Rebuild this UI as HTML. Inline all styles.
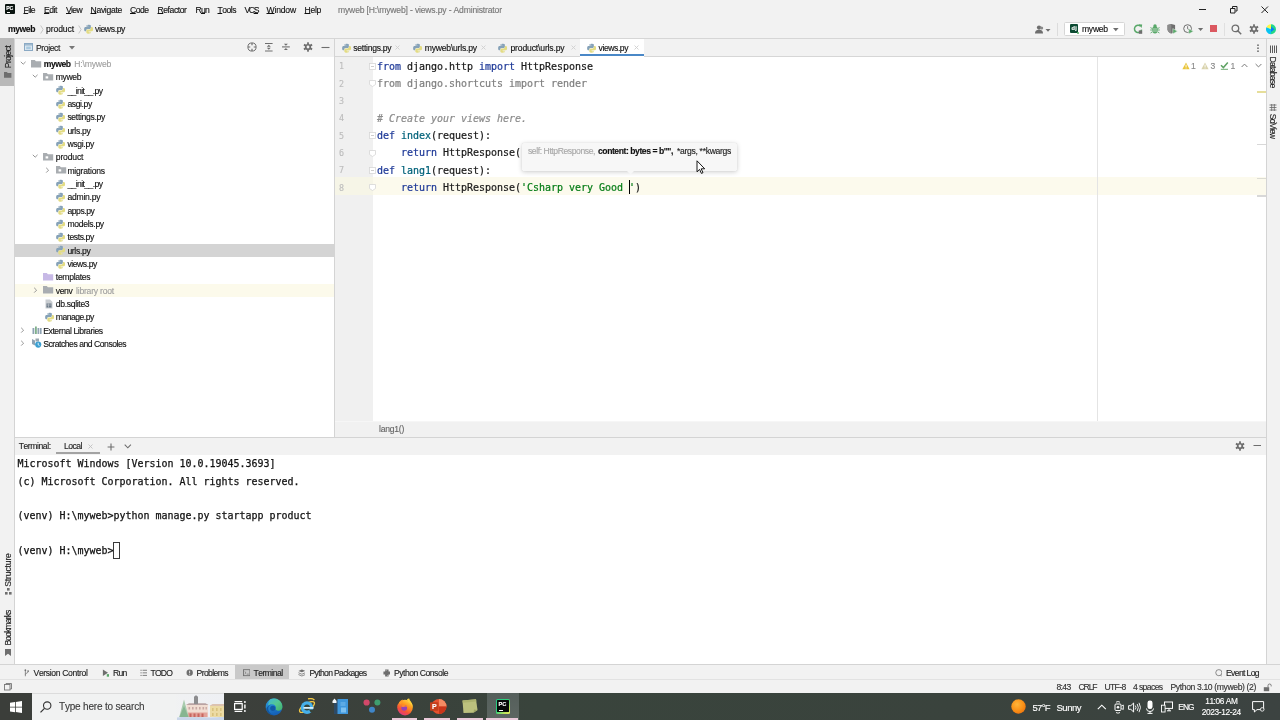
<!DOCTYPE html>
<html><head><meta charset="utf-8"><title>myweb - views.py</title>
<style>
*{box-sizing:border-box;margin:0;padding:0}
html,body{width:1280px;height:720px;overflow:hidden;background:#f2f2f2}
body{position:relative;will-change:transform;font-family:"Liberation Sans","DejaVu Sans",sans-serif;font-size:8.6px;color:#1a1a1a;font-kerning:none}
.a{position:absolute;white-space:nowrap}
.t{white-space:pre;-webkit-text-stroke:0.13px currentColor}
.mono{font-family:"DejaVu Sans Mono","Liberation Mono",monospace;font-size:9.97px;line-height:17.333px;white-space:pre;color:#1a1a1a}
.k{color:#1f3a98}.f{color:#00627a}.s{color:#067d17}.c{color:#8c8c8c;font-style:italic}.g{color:#808080}
.ed{-webkit-text-stroke:0.22px currentColor}
.tm{-webkit-text-stroke:0.25px currentColor;color:#111}
u{text-decoration-thickness:0.7px;text-underline-offset:0.3px}
</style></head><body>
<div class="a" style="left:0px;top:0px;width:1280px;height:38px;background:#f2f2f2;"></div>
<div class="a" style="left:0px;top:38px;width:1280px;height:1px;background:#d6d6d6;"></div>
<div class="a" style="left:0px;top:39px;width:14px;height:625px;background:#f2f2f2;"></div>
<div class="a" style="left:14px;top:39px;width:1px;height:625px;background:#d4d4d4;"></div>
<div class="a" style="left:1267px;top:39px;width:13px;height:625px;background:#f2f2f2;"></div>
<div class="a" style="left:1266px;top:39px;width:1px;height:625px;background:#d4d4d4;"></div>
<div class="a" style="left:15px;top:39px;width:319px;height:18px;background:#f2f2f2;"></div>
<div class="a" style="left:15px;top:57px;width:319px;height:380px;background:#fff;"></div>
<div class="a" style="left:334px;top:39px;width:1px;height:398px;background:#d4d4d4;"></div>
<div class="a" style="left:335px;top:39px;width:931px;height:17px;background:#f2f2f2;"></div>
<div class="a" style="left:335px;top:56px;width:931px;height:1px;background:#d6d6d6;"></div>
<div class="a" style="left:335px;top:57px;width:931px;height:364px;background:#fff;"></div>
<div class="a" style="left:335px;top:57px;width:38px;height:364px;background:#f0f0f0;"></div>
<div class="a" style="left:335px;top:420.5px;width:931px;height:16.5px;background:#f1f1f1;border-top:1px solid #f6f6f6;"></div>
<div class="a" style="left:15px;top:436.5px;width:1251px;height:1px;background:#d4d4d4;"></div>
<div class="a" style="left:15px;top:437.5px;width:1251px;height:17px;background:#f2f2f2;"></div>
<div class="a" style="left:15px;top:454.5px;width:1251px;height:209.5px;background:#fff;"></div>
<div class="a" style="left:0px;top:664px;width:1280px;height:1px;background:#d4d4d4;"></div>
<div class="a" style="left:0px;top:665px;width:1280px;height:14.5px;background:#f2f2f2;"></div>
<div class="a" style="left:0px;top:679px;width:1280px;height:1px;background:#e2e2e2;"></div>
<div class="a" style="left:0px;top:680px;width:1280px;height:13px;background:#f2f2f2;"></div>
<div class="a" style="left:0px;top:693px;width:1280px;height:27px;background:#2b3b36;"></div>
<div class="a" style="left:5px;top:4px;width:10px;height:10px;background:#0a1410;border-radius:1px;"></div>
<span class="a t" style="left:6.20px;top:4.90px;line-height:6px;font-size:5.2px;color:#fff;font-weight:700;letter-spacing:-0.212px;">PC</span>
<div class="a" style="left:6.7px;top:11.8px;width:3.6px;height:0.9px;background:#fff;"></div>
<span class="a t" style="left:23.5px;top:4px;line-height:12px;letter-spacing:-0.589px;color:#111"><u>F</u>ile</span>
<span class="a t" style="left:44px;top:4px;line-height:12px;letter-spacing:-0.455px;color:#111"><u>E</u>dit</span>
<span class="a t" style="left:66px;top:4px;line-height:12px;letter-spacing:-0.660px;color:#111"><u>V</u>iew</span>
<span class="a t" style="left:90.5px;top:4px;line-height:12px;letter-spacing:-0.305px;color:#111"><u>N</u>avigate</span>
<span class="a t" style="left:130px;top:4px;line-height:12px;letter-spacing:-0.515px;color:#111"><u>C</u>ode</span>
<span class="a t" style="left:157.5px;top:4px;line-height:12px;letter-spacing:-0.437px;color:#111"><u>R</u>efactor</span>
<span class="a t" style="left:195.5px;top:4px;line-height:12px;letter-spacing:-0.759px;color:#111">R<u>u</u>n</span>
<span class="a t" style="left:217.5px;top:4px;line-height:12px;letter-spacing:-0.506px;color:#111"><u>T</u>ools</span>
<span class="a t" style="left:244.5px;top:4px;line-height:12px;letter-spacing:-1.395px;color:#111">VC<u>S</u></span>
<span class="a t" style="left:266.5px;top:4px;line-height:12px;letter-spacing:-0.181px;color:#111"><u>W</u>indow</span>
<span class="a t" style="left:304.5px;top:4px;line-height:12px;letter-spacing:-0.297px;color:#111"><u>H</u>elp</span>
<span class="a t" style="left:338.00px;top:4.00px;line-height:12px;color:#777;letter-spacing:-0.176px;">myweb [H:\myweb] - views.py - Administrator</span>
<svg class="a" style="left:1196px;top:3px;" width="80" height="14" viewBox="0 0 80 14"><path d="M3 6.5h7" stroke="#222" stroke-width="1" fill="none"/><path d="M34.500 5.500h4.500v4.500h-4.500z" stroke="#222" stroke-width="1" fill="none"/><path d="M36.500 5v-1.500h4.500v4.500h-1.500" stroke="#222" stroke-width="1" fill="none"/><path d="M65.5 3.5l6.5 6.5M72 3.5l-6.5 6.5" stroke="#222" stroke-width="1" fill="none"/></svg>
<span class="a t" style="left:8.00px;top:23.40px;line-height:12px;color:#111;font-weight:700;letter-spacing:-0.431px;">myweb</span>
<svg class="a" style="left:39.5px;top:25px;" width="4" height="9" viewBox="0 0 4 9"><path d="M0.700 0.500l2.400 4-2.400 4" stroke="#c2c2c2" stroke-width="0.900" fill="none"/></svg>
<span class="a t" style="left:46.00px;top:23.40px;line-height:12px;color:#111;letter-spacing:-0.097px;">product</span>
<svg class="a" style="left:77.5px;top:25px;" width="4" height="9" viewBox="0 0 4 9"><path d="M0.700 0.500l2.400 4-2.400 4" stroke="#c2c2c2" stroke-width="0.900" fill="none"/></svg>
<svg class="a" style="left:83.5px;top:24px;" width="10" height="10" viewBox="0 0 10 10"><g transform="translate(-0.3 0.3) scale(0.98)"><path d="M4.900 0.400c-2.200 0-2.100 1-2.100 1v1h2.200v0.400H2s-1.600-0.200-1.600 2.200 1.400 2.200 1.400 2.200h0.800v-1.100s0-1.300 1.300-1.300h2.200s1.200 0 1.200-1.200V1.600s0.200-1.200-2.400-1.200z" fill="#86a2b8"/><path d="M5.100 9.600c2.200 0 2.100-1 2.100-1v-1H5v-0.400h3s1.600 0.200 1.600-2.200-1.400-2.200-1.400-2.200h-0.800v1.100s0 1.300-1.300 1.300H3.900s-1.200 0-1.200 1.200v2s-0.200 1.200 2.400 1.200z" fill="#e3dc84"/><circle cx="3.700" cy="1.400" r="0.450" fill="#f2f2f2"/><circle cx="6.300" cy="8.600" r="0.450" fill="#f2f2f2"/></g></svg>
<span class="a t" style="left:95.00px;top:23.40px;line-height:12px;color:#111;letter-spacing:-0.372px;">views.py</span>
<div class="a" style="left:0px;top:38px;width:14px;height:47.5px;background:#b9b9b9;"></div>
<span class="a t" style="left:7.80px;top:56.80px;line-height:12px;font-size:8.6px;letter-spacing:-0.638px;color:#222;transform:translate(-50%,-50%) rotate(-90deg)">Project</span>
<svg class="a" style="left:3.5px;top:72px;" width="8" height="6" viewBox="0 0 8 6"><path d="M0 0h2.800l1 1.100h3.600v4.700h-7.400z" fill="#6e6e6e"/></svg>
<span class="a t" style="left:7.80px;top:569.70px;line-height:12px;font-size:8.6px;letter-spacing:-0.154px;color:#222;transform:translate(-50%,-50%) rotate(-90deg)">Structure</span>
<svg class="a" style="left:4.5px;top:587.5px;" width="7" height="7" viewBox="0 0 7 7"><rect x="2" y="0" width="2.6" height="2.6" fill="#6e6e6e"/><rect x="0" y="4" width="2.6" height="2.6" fill="#6e6e6e"/><rect x="4" y="4" width="2.6" height="2.6" fill="#6e6e6e"/></svg>
<span class="a t" style="left:7.80px;top:627.50px;line-height:12px;font-size:8.6px;letter-spacing:-0.890px;color:#222;transform:translate(-50%,-50%) rotate(-90deg)">Bookmarks</span>
<svg class="a" style="left:5px;top:648.5px;" width="6" height="7" viewBox="0 0 6 7"><path d="M0 0h6v7l-3-2.2-3 2.2z" fill="#6e6e6e"/></svg>
<svg class="a" style="left:23.5px;top:43px;" width="9" height="8" viewBox="0 0 9 8"><rect x="0.5" y="0.5" width="8" height="7" fill="#dbe7f0" stroke="#8aa9c4" stroke-width="1"/><rect x="1" y="1" width="7" height="1.6" fill="#9fb9cf"/><rect x="2.2" y="3.6" width="4.6" height="2.6" fill="#a9c9df"/></svg>
<span class="a t" style="left:36.00px;top:41.80px;line-height:12px;color:#222;letter-spacing:-0.395px;">Project</span>
<svg class="a" style="left:69px;top:46px;" width="6" height="4" viewBox="0 0 6 4"><path d="M0 0h6l-3 3.4z" fill="#777"/></svg>
<svg class="a" style="left:246.5px;top:42px;" width="10" height="10" viewBox="0 0 10 10"><circle cx="5" cy="5" r="4.100" fill="none" stroke="#6e6e6e" stroke-width="1"/><path d="M5 1v2.300M5 9V6.700M1 5h2.300M9 5H6.700" stroke="#6e6e6e" stroke-width="1.200"/></svg>
<svg class="a" style="left:263.5px;top:42px;" width="10" height="10" viewBox="0 0 10 10"><path d="M1 1.500h7.600M1 9h7.600" stroke="#6e6e6e" stroke-width="1.100"/><path d="M4.800 2.800l2 2h-4zM4.800 7.700l2-2h-4z" fill="#6e6e6e"/></svg>
<svg class="a" style="left:281px;top:42px;" width="10" height="10" viewBox="0 0 10 10"><path d="M1 4.900h7.800" stroke="#6e6e6e" stroke-width="1.100"/><path d="M4.900 3.700l2-2h-4zM4.900 6.100l2 2h-4z" fill="#6e6e6e"/></svg>
<svg class="a" style="left:303px;top:42px;" width="10" height="10" viewBox="0 0 10 10"><g fill="#6e6e6e"><circle cx="5" cy="5" r="3.1"/><rect x="4.1" y="0.3" width="1.8" height="9.4"/><rect x="4.1" y="0.3" width="1.8" height="9.4" transform="rotate(60 5 5)"/><rect x="4.1" y="0.3" width="1.8" height="9.4" transform="rotate(120 5 5)"/></g><circle cx="5" cy="5" r="1.4" fill="#f2f2f2"/></svg>
<svg class="a" style="left:320.5px;top:45.5px;" width="9" height="3" viewBox="0 0 9 3"><path d="M0.500 1.500h8" stroke="#6e6e6e" stroke-width="1.100"/></svg>
<div class="a" style="left:15px;top:243.662px;width:319px;height:13.333px;background:#d4d4d4;"></div>
<div class="a" style="left:15px;top:283.661px;width:319px;height:13.333px;background:#fcfaeb;"></div>
<svg class="a" style="left:19.5px;top:60.966499999999996px;" width="7" height="6" viewBox="0 0 7 6"><path d="M0.8 0.8l2.4 2.400 2.400-2.400" stroke="#8f8f8f" stroke-width="0.950" fill="none"/></svg>
<svg class="a" style="left:30.5px;top:59.7665px;" width="11" height="8" viewBox="0 0 11 8"><path d="M0 0h3.800l1.100 1.300h5.300v6.300h-10.200z" fill="#a9adb1"/></svg>
<span class="a t" style="left:43.70px;top:58.07px;line-height:12px;color:#111;font-weight:700;letter-spacing:-0.431px;">myweb</span>
<span class="a t" style="left:74.20px;top:58.07px;line-height:12px;color:#a0a0a0;letter-spacing:-0.154px;">H:\myweb</span>
<svg class="a" style="left:32px;top:74.2995px;" width="7" height="6" viewBox="0 0 7 6"><path d="M0.8 0.8l2.4 2.400 2.400-2.400" stroke="#8f8f8f" stroke-width="0.950" fill="none"/></svg>
<svg class="a" style="left:42.5px;top:73.09949999999999px;" width="11" height="8" viewBox="0 0 11 8"><path d="M0 0h3.800l1.100 1.300h5.300v6.300h-10.200z" fill="#a9adb1"/><rect x="2.600" y="3.300" width="2.600" height="2.200" fill="#fff"/></svg>
<span class="a t" style="left:55.80px;top:71.40px;line-height:12px;color:#111;letter-spacing:-0.388px;">myweb</span>
<svg class="a" style="left:56.400000000000006px;top:85.3325px;" width="10" height="10" viewBox="0 0 10 10"><g transform="translate(-0.3 0.3) scale(0.98)"><path d="M4.900 0.400c-2.200 0-2.100 1-2.100 1v1h2.200v0.400H2s-1.600-0.200-1.600 2.200 1.400 2.200 1.400 2.200h0.800v-1.100s0-1.300 1.300-1.300h2.200s1.200 0 1.200-1.200V1.600s0.200-1.200-2.400-1.200z" fill="#86a2b8"/><path d="M5.100 9.600c2.200 0 2.100-1 2.100-1v-1H5v-0.400h3s1.600 0.200 1.600-2.200-1.400-2.200-1.400-2.200h-0.800v1.100s0 1.300-1.300 1.300H3.900s-1.200 0-1.200 1.200v2s-0.200 1.200 2.400 1.200z" fill="#e3dc84"/><circle cx="3.700" cy="1.400" r="0.450" fill="#f2f2f2"/><circle cx="6.300" cy="8.600" r="0.450" fill="#f2f2f2"/></g></svg>
<span class="a t" style="left:67.40px;top:84.73px;line-height:12px;color:#111;letter-spacing:-0.599px;">__init__.py</span>
<svg class="a" style="left:56.400000000000006px;top:98.6655px;" width="10" height="10" viewBox="0 0 10 10"><g transform="translate(-0.3 0.3) scale(0.98)"><path d="M4.900 0.400c-2.200 0-2.100 1-2.100 1v1h2.200v0.400H2s-1.600-0.200-1.600 2.200 1.400 2.200 1.400 2.200h0.800v-1.100s0-1.300 1.300-1.300h2.200s1.200 0 1.200-1.200V1.600s0.200-1.200-2.400-1.200z" fill="#86a2b8"/><path d="M5.100 9.600c2.200 0 2.100-1 2.100-1v-1H5v-0.400h3s1.600 0.200 1.600-2.200-1.400-2.200-1.400-2.200h-0.800v1.100s0 1.300-1.300 1.300H3.900s-1.200 0-1.200 1.200v2s-0.200 1.200 2.400 1.200z" fill="#e3dc84"/><circle cx="3.700" cy="1.400" r="0.450" fill="#f2f2f2"/><circle cx="6.300" cy="8.600" r="0.450" fill="#f2f2f2"/></g></svg>
<span class="a t" style="left:67.40px;top:98.07px;line-height:12px;color:#111;letter-spacing:-0.392px;">asgi.py</span>
<svg class="a" style="left:56.400000000000006px;top:111.99849999999999px;" width="10" height="10" viewBox="0 0 10 10"><g transform="translate(-0.3 0.3) scale(0.98)"><path d="M4.900 0.400c-2.200 0-2.100 1-2.100 1v1h2.200v0.400H2s-1.600-0.200-1.600 2.200 1.400 2.200 1.400 2.200h0.800v-1.100s0-1.300 1.300-1.300h2.200s1.200 0 1.200-1.200V1.600s0.200-1.200-2.400-1.200z" fill="#86a2b8"/><path d="M5.100 9.600c2.200 0 2.100-1 2.100-1v-1H5v-0.400h3s1.600 0.200 1.600-2.200-1.400-2.200-1.400-2.200h-0.800v1.100s0 1.300-1.300 1.300H3.900s-1.200 0-1.200 1.200v2s-0.200 1.200 2.400 1.200z" fill="#e3dc84"/><circle cx="3.700" cy="1.400" r="0.450" fill="#f2f2f2"/><circle cx="6.300" cy="8.600" r="0.450" fill="#f2f2f2"/></g></svg>
<span class="a t" style="left:67.40px;top:111.40px;line-height:12px;color:#111;letter-spacing:-0.319px;">settings.py</span>
<svg class="a" style="left:56.400000000000006px;top:125.3315px;" width="10" height="10" viewBox="0 0 10 10"><g transform="translate(-0.3 0.3) scale(0.98)"><path d="M4.900 0.400c-2.200 0-2.100 1-2.100 1v1h2.200v0.400H2s-1.600-0.200-1.600 2.200 1.400 2.200 1.400 2.200h0.800v-1.100s0-1.300 1.300-1.300h2.200s1.200 0 1.200-1.200V1.600s0.200-1.200-2.400-1.200z" fill="#86a2b8"/><path d="M5.100 9.600c2.200 0 2.100-1 2.100-1v-1H5v-0.400h3s1.600 0.200 1.600-2.200-1.400-2.200-1.400-2.200h-0.800v1.100s0 1.300-1.300 1.300H3.900s-1.200 0-1.200 1.200v2s-0.200 1.200 2.400 1.200z" fill="#e3dc84"/><circle cx="3.700" cy="1.400" r="0.450" fill="#f2f2f2"/><circle cx="6.300" cy="8.600" r="0.450" fill="#f2f2f2"/></g></svg>
<span class="a t" style="left:67.40px;top:124.73px;line-height:12px;color:#111;letter-spacing:-0.333px;">urls.py</span>
<svg class="a" style="left:56.400000000000006px;top:138.6645px;" width="10" height="10" viewBox="0 0 10 10"><g transform="translate(-0.3 0.3) scale(0.98)"><path d="M4.900 0.400c-2.200 0-2.100 1-2.100 1v1h2.200v0.400H2s-1.600-0.200-1.600 2.200 1.400 2.200 1.400 2.200h0.800v-1.100s0-1.300 1.300-1.300h2.200s1.200 0 1.200-1.200V1.600s0.200-1.200-2.400-1.200z" fill="#86a2b8"/><path d="M5.100 9.600c2.200 0 2.100-1 2.100-1v-1H5v-0.400h3s1.600 0.200 1.600-2.200-1.400-2.200-1.400-2.200h-0.800v1.100s0 1.300-1.300 1.300H3.900s-1.200 0-1.200 1.200v2s-0.200 1.200 2.400 1.200z" fill="#e3dc84"/><circle cx="3.700" cy="1.400" r="0.450" fill="#f2f2f2"/><circle cx="6.300" cy="8.600" r="0.450" fill="#f2f2f2"/></g></svg>
<span class="a t" style="left:67.40px;top:138.06px;line-height:12px;color:#111;letter-spacing:-0.311px;">wsgi.py</span>
<svg class="a" style="left:32px;top:154.29750000000004px;" width="7" height="6" viewBox="0 0 7 6"><path d="M0.8 0.8l2.4 2.400 2.400-2.400" stroke="#8f8f8f" stroke-width="0.950" fill="none"/></svg>
<svg class="a" style="left:42.5px;top:153.09750000000003px;" width="11" height="8" viewBox="0 0 11 8"><path d="M0 0h3.800l1.100 1.300h5.300v6.300h-10.200z" fill="#a9adb1"/><rect x="2.600" y="3.300" width="2.600" height="2.200" fill="#fff"/></svg>
<span class="a t" style="left:55.80px;top:151.40px;line-height:12px;color:#111;letter-spacing:-0.169px;">product</span>
<svg class="a" style="left:44.5px;top:166.9305px;" width="6" height="7" viewBox="0 0 6 7"><path d="M1.200 0.800l2.400 2.400-2.400 2.400" stroke="#8f8f8f" stroke-width="0.950" fill="none"/></svg>
<svg class="a" style="left:55.5px;top:166.4305px;" width="11" height="8" viewBox="0 0 11 8"><path d="M0 0h3.800l1.100 1.300h5.300v6.300h-10.200z" fill="#a9adb1"/><rect x="2.600" y="3.300" width="2.600" height="2.200" fill="#fff"/></svg>
<span class="a t" style="left:67.40px;top:164.73px;line-height:12px;color:#111;letter-spacing:-0.217px;">migrations</span>
<svg class="a" style="left:56.400000000000006px;top:178.66350000000003px;" width="10" height="10" viewBox="0 0 10 10"><g transform="translate(-0.3 0.3) scale(0.98)"><path d="M4.900 0.400c-2.200 0-2.100 1-2.100 1v1h2.200v0.400H2s-1.600-0.200-1.600 2.200 1.400 2.200 1.400 2.200h0.800v-1.100s0-1.300 1.300-1.300h2.200s1.200 0 1.200-1.200V1.600s0.200-1.200-2.400-1.200z" fill="#86a2b8"/><path d="M5.100 9.600c2.200 0 2.100-1 2.100-1v-1H5v-0.400h3s1.600 0.200 1.600-2.200-1.400-2.200-1.400-2.200h-0.800v1.100s0 1.300-1.300 1.300H3.900s-1.200 0-1.200 1.200v2s-0.200 1.200 2.400 1.200z" fill="#e3dc84"/><circle cx="3.700" cy="1.400" r="0.450" fill="#f2f2f2"/><circle cx="6.300" cy="8.600" r="0.450" fill="#f2f2f2"/></g></svg>
<span class="a t" style="left:67.40px;top:178.06px;line-height:12px;color:#111;letter-spacing:-0.599px;">__init__.py</span>
<svg class="a" style="left:56.400000000000006px;top:191.99650000000003px;" width="10" height="10" viewBox="0 0 10 10"><g transform="translate(-0.3 0.3) scale(0.98)"><path d="M4.900 0.400c-2.200 0-2.100 1-2.100 1v1h2.200v0.400H2s-1.600-0.200-1.600 2.200 1.400 2.200 1.400 2.200h0.800v-1.100s0-1.300 1.300-1.300h2.200s1.200 0 1.200-1.200V1.600s0.200-1.200-2.400-1.200z" fill="#86a2b8"/><path d="M5.100 9.600c2.200 0 2.100-1 2.100-1v-1H5v-0.400h3s1.600 0.200 1.600-2.200-1.400-2.200-1.400-2.200h-0.800v1.100s0 1.300-1.300 1.300H3.900s-1.200 0-1.200 1.200v2s-0.200 1.200 2.400 1.200z" fill="#e3dc84"/><circle cx="3.700" cy="1.400" r="0.450" fill="#f2f2f2"/><circle cx="6.300" cy="8.600" r="0.450" fill="#f2f2f2"/></g></svg>
<span class="a t" style="left:67.40px;top:191.40px;line-height:12px;color:#111;letter-spacing:-0.237px;">admin.py</span>
<svg class="a" style="left:56.400000000000006px;top:205.32950000000002px;" width="10" height="10" viewBox="0 0 10 10"><g transform="translate(-0.3 0.3) scale(0.98)"><path d="M4.900 0.400c-2.200 0-2.100 1-2.100 1v1h2.200v0.400H2s-1.600-0.200-1.600 2.200 1.400 2.200 1.400 2.200h0.800v-1.100s0-1.300 1.300-1.300h2.200s1.200 0 1.200-1.200V1.600s0.200-1.200-2.400-1.200z" fill="#86a2b8"/><path d="M5.100 9.600c2.200 0 2.100-1 2.100-1v-1H5v-0.400h3s1.600 0.200 1.600-2.200-1.400-2.200-1.400-2.200h-0.800v1.100s0 1.300-1.300 1.300H3.900s-1.200 0-1.200 1.200v2s-0.200 1.200 2.400 1.200z" fill="#e3dc84"/><circle cx="3.700" cy="1.400" r="0.450" fill="#f2f2f2"/><circle cx="6.300" cy="8.600" r="0.450" fill="#f2f2f2"/></g></svg>
<span class="a t" style="left:67.40px;top:204.73px;line-height:12px;color:#111;letter-spacing:-0.446px;">apps.py</span>
<svg class="a" style="left:56.400000000000006px;top:218.66250000000002px;" width="10" height="10" viewBox="0 0 10 10"><g transform="translate(-0.3 0.3) scale(0.98)"><path d="M4.900 0.400c-2.200 0-2.100 1-2.100 1v1h2.200v0.400H2s-1.600-0.200-1.600 2.200 1.400 2.200 1.400 2.200h0.800v-1.100s0-1.300 1.300-1.300h2.200s1.200 0 1.200-1.200V1.600s0.200-1.200-2.400-1.200z" fill="#86a2b8"/><path d="M5.100 9.600c2.200 0 2.100-1 2.100-1v-1H5v-0.400h3s1.600 0.200 1.600-2.200-1.400-2.200-1.400-2.200h-0.800v1.100s0 1.300-1.300 1.300H3.900s-1.200 0-1.200 1.200v2s-0.200 1.200 2.400 1.200z" fill="#e3dc84"/><circle cx="3.700" cy="1.400" r="0.450" fill="#f2f2f2"/><circle cx="6.300" cy="8.600" r="0.450" fill="#f2f2f2"/></g></svg>
<span class="a t" style="left:67.40px;top:218.06px;line-height:12px;color:#111;letter-spacing:-0.299px;">models.py</span>
<svg class="a" style="left:56.400000000000006px;top:231.99550000000002px;" width="10" height="10" viewBox="0 0 10 10"><g transform="translate(-0.3 0.3) scale(0.98)"><path d="M4.900 0.400c-2.200 0-2.100 1-2.100 1v1h2.200v0.400H2s-1.600-0.200-1.600 2.200 1.400 2.200 1.400 2.200h0.800v-1.100s0-1.300 1.300-1.300h2.200s1.200 0 1.200-1.200V1.600s0.200-1.200-2.400-1.200z" fill="#86a2b8"/><path d="M5.100 9.600c2.200 0 2.100-1 2.100-1v-1H5v-0.400h3s1.600 0.200 1.600-2.200-1.400-2.200-1.400-2.200h-0.800v1.100s0 1.300-1.300 1.300H3.900s-1.200 0-1.200 1.200v2s-0.200 1.200 2.400 1.200z" fill="#e3dc84"/><circle cx="3.700" cy="1.400" r="0.450" fill="#f2f2f2"/><circle cx="6.300" cy="8.600" r="0.450" fill="#f2f2f2"/></g></svg>
<span class="a t" style="left:67.40px;top:231.40px;line-height:12px;color:#111;letter-spacing:-0.392px;">tests.py</span>
<svg class="a" style="left:56.400000000000006px;top:245.32850000000002px;" width="10" height="10" viewBox="0 0 10 10"><g transform="translate(-0.3 0.3) scale(0.98)"><path d="M4.900 0.400c-2.200 0-2.100 1-2.100 1v1h2.200v0.400H2s-1.600-0.200-1.600 2.200 1.400 2.200 1.400 2.200h0.800v-1.100s0-1.300 1.300-1.300h2.200s1.200 0 1.200-1.200V1.600s0.200-1.200-2.400-1.200z" fill="#86a2b8"/><path d="M5.100 9.600c2.200 0 2.100-1 2.100-1v-1H5v-0.400h3s1.600 0.200 1.600-2.200-1.400-2.200-1.400-2.200h-0.800v1.100s0 1.300-1.300 1.300H3.900s-1.200 0-1.200 1.200v2s-0.200 1.200 2.400 1.200z" fill="#e3dc84"/><circle cx="3.700" cy="1.400" r="0.450" fill="#f2f2f2"/><circle cx="6.300" cy="8.600" r="0.450" fill="#f2f2f2"/></g></svg>
<span class="a t" style="left:67.40px;top:244.73px;line-height:12px;color:#111;letter-spacing:-0.333px;">urls.py</span>
<svg class="a" style="left:56.400000000000006px;top:258.6615px;" width="10" height="10" viewBox="0 0 10 10"><g transform="translate(-0.3 0.3) scale(0.98)"><path d="M4.900 0.400c-2.200 0-2.100 1-2.100 1v1h2.200v0.400H2s-1.600-0.200-1.600 2.200 1.400 2.200 1.400 2.200h0.800v-1.100s0-1.300 1.300-1.300h2.200s1.200 0 1.200-1.200V1.600s0.200-1.200-2.400-1.200z" fill="#86a2b8"/><path d="M5.100 9.600c2.200 0 2.100-1 2.100-1v-1H5v-0.400h3s1.600 0.200 1.600-2.200-1.400-2.200-1.400-2.200h-0.800v1.100s0 1.300-1.300 1.300H3.900s-1.200 0-1.200 1.200v2s-0.200 1.200 2.400 1.200z" fill="#e3dc84"/><circle cx="3.700" cy="1.400" r="0.450" fill="#f2f2f2"/><circle cx="6.300" cy="8.600" r="0.450" fill="#f2f2f2"/></g></svg>
<span class="a t" style="left:67.40px;top:258.06px;line-height:12px;color:#111;letter-spacing:-0.434px;">views.py</span>
<svg class="a" style="left:42.5px;top:273.0945px;" width="11" height="8" viewBox="0 0 11 8"><path d="M0 0h3.800l1.100 1.300h5.300v6.300h-10.200z" fill="#c7b9e6"/></svg>
<span class="a t" style="left:55.80px;top:271.39px;line-height:12px;color:#111;letter-spacing:-0.309px;">templates</span>
<svg class="a" style="left:32.5px;top:286.9275px;" width="6" height="7" viewBox="0 0 6 7"><path d="M1.200 0.800l2.400 2.400-2.400 2.400" stroke="#8f8f8f" stroke-width="0.950" fill="none"/></svg>
<svg class="a" style="left:42.5px;top:286.4275px;" width="11" height="8" viewBox="0 0 11 8"><path d="M0 0h3.800l1.100 1.300h5.300v6.300h-10.200z" fill="#a9adb1"/></svg>
<span class="a t" style="left:55.80px;top:284.73px;line-height:12px;color:#111;letter-spacing:-0.416px;">venv</span>
<span class="a t" style="left:76.00px;top:284.73px;line-height:12px;color:#a0a0a0;letter-spacing:-0.218px;">library root</span>
<svg class="a" style="left:45px;top:298.994px;" width="8" height="10" viewBox="0 0 8 10"><path d="M0.5 0.5h4.5l2.5 2.5v6.5h-7z" fill="#c9cdd1"/><rect x="1.5" y="4.5" width="5" height="4" fill="#6b7a88"/><path d="M1.5 6h5M3.5 4.5v4" stroke="#c9cdd1" stroke-width="0.6"/></svg>
<span class="a t" style="left:55.80px;top:298.06px;line-height:12px;color:#111;letter-spacing:-0.331px;">db.sqlite3</span>
<svg class="a" style="left:44.8px;top:311.9935px;" width="10" height="10" viewBox="0 0 10 10"><g transform="translate(-0.3 0.3) scale(0.98)"><path d="M4.900 0.400c-2.200 0-2.100 1-2.100 1v1h2.200v0.400H2s-1.600-0.200-1.600 2.200 1.400 2.200 1.400 2.200h0.800v-1.100s0-1.300 1.300-1.300h2.200s1.200 0 1.200-1.200V1.600s0.200-1.200-2.400-1.200z" fill="#86a2b8"/><path d="M5.100 9.600c2.200 0 2.100-1 2.100-1v-1H5v-0.400h3s1.600 0.200 1.600-2.200-1.400-2.200-1.400-2.200h-0.800v1.100s0 1.300-1.300 1.300H3.900s-1.200 0-1.200 1.200v2s-0.200 1.200 2.400 1.200z" fill="#e3dc84"/><circle cx="3.700" cy="1.400" r="0.450" fill="#f2f2f2"/><circle cx="6.300" cy="8.600" r="0.450" fill="#f2f2f2"/></g></svg>
<span class="a t" style="left:55.80px;top:311.39px;line-height:12px;color:#111;letter-spacing:-0.505px;">manage.py</span>
<svg class="a" style="left:19.5px;top:326.92650000000003px;" width="6" height="7" viewBox="0 0 6 7"><path d="M1.200 0.800l2.400 2.400-2.400 2.400" stroke="#8f8f8f" stroke-width="0.950" fill="none"/></svg>
<svg class="a" style="left:31.5px;top:326.16px;" width="10" height="8" viewBox="0 0 10 8"><rect x="0.5" y="2" width="1.8" height="6" fill="#8fa3b3"/><rect x="3" y="0.5" width="1.8" height="7.5" fill="#7fb08a"/><rect x="5.5" y="2" width="1.8" height="6" fill="#8fa3b3"/><rect x="8" y="2" width="1.6" height="6" fill="#8fa3b3"/></svg>
<span class="a t" style="left:43.20px;top:324.73px;line-height:12px;color:#111;letter-spacing:-0.412px;">External Libraries</span>
<svg class="a" style="left:19.5px;top:340.2595px;" width="6" height="7" viewBox="0 0 6 7"><path d="M1.200 0.800l2.400 2.400-2.400 2.400" stroke="#8f8f8f" stroke-width="0.950" fill="none"/></svg>
<svg class="a" style="left:31px;top:338.493px;" width="11" height="10" viewBox="0 0 11 10"><path d="M1 1l3 1.5v5L1 6z" fill="#8fa3b3"/><path d="M4.5 0.5h3.5v3h-3.5z" fill="#9aa7b0"/><circle cx="7.2" cy="6.6" r="3.1" fill="#3b9fd1"/><path d="M7.2 4.8v2l1.3 0.8" stroke="#fff" stroke-width="0.8" fill="none"/></svg>
<span class="a t" style="left:43.20px;top:338.06px;line-height:12px;color:#111;letter-spacing:-0.464px;">Scratches and Consoles</span>
<div class="a" style="left:580px;top:39px;width:64px;height:18px;background:#fff;"></div>
<div class="a" style="left:580px;top:54.3px;width:64px;height:2.2px;background:#4a88c7;"></div>
<svg class="a" style="left:342.0px;top:42.8px;" width="10" height="10" viewBox="0 0 10 10"><g transform="translate(-0.3 0.3) scale(0.98)"><path d="M4.900 0.400c-2.200 0-2.100 1-2.100 1v1h2.200v0.400H2s-1.600-0.200-1.600 2.200 1.400 2.200 1.400 2.200h0.800v-1.100s0-1.300 1.300-1.300h2.200s1.200 0 1.200-1.200V1.600s0.200-1.200-2.400-1.200z" fill="#86a2b8"/><path d="M5.100 9.600c2.200 0 2.100-1 2.100-1v-1H5v-0.400h3s1.600 0.200 1.600-2.200-1.400-2.200-1.400-2.200h-0.800v1.100s0 1.300-1.300 1.300H3.900s-1.200 0-1.200 1.200v2s-0.200 1.200 2.400 1.200z" fill="#e3dc84"/><circle cx="3.700" cy="1.400" r="0.450" fill="#f2f2f2"/><circle cx="6.300" cy="8.600" r="0.450" fill="#f2f2f2"/></g></svg>
<span class="a t" style="left:353.30px;top:41.60px;line-height:12px;color:#111;letter-spacing:-0.283px;">settings.py</span>
<svg class="a" style="left:395.0px;top:45.3px;" width="5" height="5" viewBox="0 0 5 5"><path d="M0.5 0.5l4 4M4.5 0.5l-4 4" stroke="#cfcfcf" stroke-width="0.9"/></svg>
<svg class="a" style="left:413.0px;top:42.8px;" width="10" height="10" viewBox="0 0 10 10"><g transform="translate(-0.3 0.3) scale(0.98)"><path d="M4.900 0.400c-2.200 0-2.100 1-2.100 1v1h2.200v0.400H2s-1.600-0.200-1.600 2.200 1.400 2.200 1.400 2.200h0.800v-1.100s0-1.300 1.300-1.300h2.200s1.200 0 1.200-1.200V1.600s0.200-1.200-2.400-1.200z" fill="#86a2b8"/><path d="M5.100 9.600c2.200 0 2.100-1 2.100-1v-1H5v-0.400h3s1.600 0.200 1.600-2.200-1.400-2.200-1.400-2.200h-0.800v1.100s0 1.300-1.300 1.300H3.900s-1.200 0-1.200 1.200v2s-0.200 1.200 2.400 1.200z" fill="#e3dc84"/><circle cx="3.700" cy="1.400" r="0.450" fill="#f2f2f2"/><circle cx="6.300" cy="8.600" r="0.450" fill="#f2f2f2"/></g></svg>
<span class="a t" style="left:424.80px;top:41.60px;line-height:12px;color:#111;letter-spacing:-0.227px;">myweb\urls.py</span>
<svg class="a" style="left:481.0px;top:45.3px;" width="5" height="5" viewBox="0 0 5 5"><path d="M0.5 0.5l4 4M4.5 0.5l-4 4" stroke="#cfcfcf" stroke-width="0.9"/></svg>
<svg class="a" style="left:498.0px;top:42.8px;" width="10" height="10" viewBox="0 0 10 10"><g transform="translate(-0.3 0.3) scale(0.98)"><path d="M4.900 0.400c-2.200 0-2.100 1-2.100 1v1h2.200v0.400H2s-1.600-0.200-1.600 2.200 1.400 2.200 1.400 2.200h0.800v-1.100s0-1.300 1.300-1.300h2.200s1.200 0 1.200-1.200V1.600s0.200-1.200-2.400-1.200z" fill="#86a2b8"/><path d="M5.100 9.600c2.200 0 2.100-1 2.100-1v-1H5v-0.400h3s1.600 0.200 1.600-2.200-1.400-2.200-1.400-2.200h-0.800v1.100s0 1.300-1.300 1.300H3.900s-1.200 0-1.200 1.200v2s-0.200 1.200 2.400 1.200z" fill="#e3dc84"/><circle cx="3.700" cy="1.400" r="0.450" fill="#f2f2f2"/><circle cx="6.300" cy="8.600" r="0.450" fill="#f2f2f2"/></g></svg>
<span class="a t" style="left:510.50px;top:41.60px;line-height:12px;color:#111;letter-spacing:-0.160px;">product\urls.py</span>
<svg class="a" style="left:570.5px;top:45.3px;" width="5" height="5" viewBox="0 0 5 5"><path d="M0.5 0.5l4 4M4.5 0.5l-4 4" stroke="#cfcfcf" stroke-width="0.9"/></svg>
<svg class="a" style="left:586.8px;top:42.8px;" width="10" height="10" viewBox="0 0 10 10"><g transform="translate(-0.3 0.3) scale(0.98)"><path d="M4.900 0.400c-2.200 0-2.100 1-2.100 1v1h2.200v0.400H2s-1.600-0.200-1.600 2.200 1.400 2.200 1.400 2.200h0.800v-1.100s0-1.300 1.300-1.300h2.200s1.200 0 1.200-1.200V1.600s0.200-1.200-2.400-1.200z" fill="#86a2b8"/><path d="M5.100 9.600c2.200 0 2.100-1 2.100-1v-1H5v-0.400h3s1.600 0.200 1.600-2.200-1.400-2.200-1.400-2.200h-0.800v1.100s0 1.300-1.300 1.300H3.900s-1.200 0-1.200 1.200v2s-0.200 1.200 2.400 1.200z" fill="#e3dc84"/><circle cx="3.700" cy="1.400" r="0.450" fill="#f2f2f2"/><circle cx="6.300" cy="8.600" r="0.450" fill="#f2f2f2"/></g></svg>
<span class="a t" style="left:598.60px;top:41.60px;line-height:12px;color:#111;letter-spacing:-0.434px;">views.py</span>
<svg class="a" style="left:634.0px;top:45.3px;" width="5" height="5" viewBox="0 0 5 5"><path d="M0.5 0.5l4 4M4.5 0.5l-4 4" stroke="#cfcfcf" stroke-width="0.9"/></svg>
<svg class="a" style="left:1256px;top:43.5px;" width="4" height="9" viewBox="0 0 4 9"><circle cx="2" cy="1.2" r="0.9" fill="#6e6e6e"/><circle cx="2" cy="4.2" r="0.9" fill="#6e6e6e"/><circle cx="2" cy="7.2" r="0.9" fill="#6e6e6e"/></svg>
<div class="a" style="left:335px;top:177.2px;width:931px;height:18px;background:#fcfaed;"></div>
<div class="a" style="left:335px;top:177.2px;width:38px;height:18px;background:#f6f5e7;"></div>
<div class="a" style="left:1097px;top:57px;width:1px;height:364px;background:#e4e4e4;"></div>
<span class="a t" style="left:339.00px;top:60.47px;line-height:12px;font-size:8.4px;color:#bdbdbd;font-family:'DejaVu Sans Mono',monospace;">1</span>
<span class="a t" style="left:339.00px;top:77.80px;line-height:12px;font-size:8.4px;color:#bdbdbd;font-family:'DejaVu Sans Mono',monospace;">2</span>
<span class="a t" style="left:339.00px;top:95.13px;line-height:12px;font-size:8.4px;color:#bdbdbd;font-family:'DejaVu Sans Mono',monospace;">3</span>
<span class="a t" style="left:339.00px;top:112.47px;line-height:12px;font-size:8.4px;color:#bdbdbd;font-family:'DejaVu Sans Mono',monospace;">4</span>
<span class="a t" style="left:339.00px;top:129.80px;line-height:12px;font-size:8.4px;color:#bdbdbd;font-family:'DejaVu Sans Mono',monospace;">5</span>
<span class="a t" style="left:339.00px;top:147.13px;line-height:12px;font-size:8.4px;color:#bdbdbd;font-family:'DejaVu Sans Mono',monospace;">6</span>
<span class="a t" style="left:339.00px;top:164.46px;line-height:12px;font-size:8.4px;color:#bdbdbd;font-family:'DejaVu Sans Mono',monospace;">7</span>
<span class="a t" style="left:339.00px;top:181.80px;line-height:12px;font-size:8.4px;color:#bdbdbd;font-family:'DejaVu Sans Mono',monospace;">8</span>
<span class="a mono ed" style="left:377px;top:57.60px"><span class="k">from</span> django.http <span class="k">import</span> HttpResponse</span>
<span class="a mono ed" style="left:377px;top:74.93px"><span class="g">from django.shortcuts import render</span></span>
<span class="a mono ed" style="left:377px;top:109.60px"><span class="c"># Create your views here.</span></span>
<span class="a mono ed" style="left:377px;top:126.93px"><span class="k">def</span> <span class="f">index</span>(request):</span>
<span class="a mono ed" style="left:377px;top:144.26px">    <span class="k">return</span> HttpResponse(</span>
<span class="a mono ed" style="left:377px;top:161.60px"><span class="k">def</span> <span class="f">lang1</span>(request):</span>
<span class="a mono ed" style="left:377px;top:178.93px">    <span class="k">return</span> HttpResponse(<span class="s">'Csharp very Good '</span>)</span>
<div class="a" style="left:629px;top:179.831px;width:1.3px;height:14.5px;background:#000;"></div>
<svg class="a" style="left:369px;top:63.1665px;" width="7" height="7" viewBox="0 0 7 7"><rect x="0.5" y="0.5" width="6" height="6" fill="#fff" stroke="#d6d6d6" stroke-width="0.8"/><path d="M2 3.5h3" stroke="#c0c0c0" stroke-width="0.8"/></svg>
<svg class="a" style="left:369px;top:80.4995px;" width="7" height="7" viewBox="0 0 7 7"><path d="M0.5 0.5h6v4l-3 2-3-2z" fill="#fff" stroke="#d6d6d6" stroke-width="0.8"/></svg>
<svg class="a" style="left:369px;top:132.49849999999998px;" width="7" height="7" viewBox="0 0 7 7"><rect x="0.5" y="0.5" width="6" height="6" fill="#fff" stroke="#d6d6d6" stroke-width="0.8"/><path d="M2 3.5h3" stroke="#c0c0c0" stroke-width="0.8"/></svg>
<svg class="a" style="left:369px;top:149.8315px;" width="7" height="7" viewBox="0 0 7 7"><path d="M0.5 0.5h6v4l-3 2-3-2z" fill="#fff" stroke="#d6d6d6" stroke-width="0.8"/></svg>
<svg class="a" style="left:369px;top:167.16449999999998px;" width="7" height="7" viewBox="0 0 7 7"><rect x="0.5" y="0.5" width="6" height="6" fill="#fff" stroke="#d6d6d6" stroke-width="0.8"/><path d="M2 3.5h3" stroke="#c0c0c0" stroke-width="0.8"/></svg>
<svg class="a" style="left:369px;top:184.4975px;" width="7" height="7" viewBox="0 0 7 7"><path d="M0.5 0.5h6v4l-3 2-3-2z" fill="#fff" stroke="#d6d6d6" stroke-width="0.8"/></svg>
<svg class="a" style="left:1181.5px;top:61.5px;" width="8" height="8" viewBox="0 0 8 8"><path d="M4 0.6l3.6 6.6H0.4z" fill="#e9c53a"/><rect x="3.6" y="2.6" width="0.9" height="2.4" fill="#fff"/><rect x="3.6" y="5.5" width="0.9" height="0.9" fill="#fff"/></svg>
<span class="a t" style="left:1191.00px;top:59.50px;line-height:12px;color:#8a8a8a;">1</span>
<svg class="a" style="left:1200.5px;top:61.5px;" width="8" height="8" viewBox="0 0 8 8"><path d="M4 0.6l3.6 6.6H0.4z" fill="#d9d3ad"/><rect x="3.6" y="2.6" width="0.9" height="2.4" fill="#fff"/><rect x="3.6" y="5.5" width="0.9" height="0.9" fill="#fff"/></svg>
<span class="a t" style="left:1210.50px;top:59.50px;line-height:12px;color:#8a8a8a;">3</span>
<svg class="a" style="left:1219.5px;top:61px;" width="9" height="9" viewBox="0 0 9 9"><path d="M1 4.2l2.4 2.4 4.4-5" stroke="#5ea263" stroke-width="1.5" fill="none"/><path d="M0.8 8.3h7.2" stroke="#5ea263" stroke-width="0.9"/></svg>
<span class="a t" style="left:1230.50px;top:59.50px;line-height:12px;color:#8a8a8a;">1</span>
<svg class="a" style="left:1241px;top:63px;" width="7" height="5" viewBox="0 0 7 5"><path d="M0.6 4l2.9-2.9 2.9 2.9" stroke="#7a7a7a" stroke-width="1" fill="none"/></svg>
<svg class="a" style="left:1255px;top:63px;" width="7" height="5" viewBox="0 0 7 5"><path d="M0.6 1l2.9 2.9 2.9-2.9" stroke="#7a7a7a" stroke-width="1" fill="none"/></svg>
<div class="a" style="left:1256.5px;top:91px;width:9.5px;height:1.5px;background:#e6de9a;"></div>
<div class="a" style="left:1256.5px;top:143.5px;width:9.5px;height:1.5px;background:#d8d8d8;"></div>
<div class="a" style="left:1256.5px;top:177.8px;width:9.5px;height:1.2px;background:#dcdcd4;"></div>
<div class="a" style="left:1256.5px;top:195.4px;width:9.5px;height:1.2px;background:#d8d8d8;"></div>
<div class="a" style="left:521.5px;top:143px;width:215.5px;height:27.5px;background:#f7f7f7;box-shadow:0 1px 5px rgba(0,0,0,.2),0 0 1px rgba(0,0,0,.15);border-radius:1.5px;"></div>
<span class="a t" style="left:528.00px;top:144.60px;line-height:12px;color:#a8a8a8;letter-spacing:-0.423px;">self: HttpResponse,</span>
<span class="a t" style="left:598.00px;top:144.60px;line-height:12px;color:#111;font-weight:700;letter-spacing:-0.446px;">content: bytes = b&quot;&quot;,</span>
<span class="a t" style="left:677.00px;top:144.60px;line-height:12px;color:#222;letter-spacing:-0.319px;">*args, **kwargs</span>
<svg class="a" style="left:626.5px;top:170.5px;" width="7" height="4" viewBox="0 0 7 4"><path d="M0 0h7l-3.5 3.6z" fill="#f7f7f7"/></svg>
<svg class="a" style="left:695.5px;top:159.5px;" width="10" height="15" viewBox="0 0 10 15"><path d="M1 0.8v11l2.6-2.4 1.8 4 1.6-0.7-1.8-3.9h3.5z" fill="#fff" stroke="#000" stroke-width="0.9" stroke-linejoin="miter"/></svg>
<span class="a t" style="left:379.00px;top:423.30px;line-height:12px;color:#666;letter-spacing:-0.252px;">lang1()</span>
<svg class="a" style="left:1033.5px;top:24.5px;" width="18" height="9" viewBox="0 0 18 9"><circle cx="5" cy="2.6" r="2.1" fill="#6e6e6e"/><path d="M1 8.6c0-3 1.8-3.8 4-3.8s4 0.8 4 3.8z" fill="#6e6e6e"/><circle cx="7.6" cy="3" r="1.6" fill="#8a8a8a"/><path d="M11.5 4h5l-2.5 2.8z" fill="#6e6e6e"/></svg>
<div class="a" style="left:1057px;top:23px;width:1px;height:13px;background:#dcdcdc;"></div>
<div class="a" style="left:1064px;top:21.5px;width:60.5px;height:14px;background:#fff;border:1px solid #d6d6d6;border-radius:1.5px;"></div>
<div class="a" style="left:1070.4px;top:24.2px;width:7.8px;height:8.8px;background:#0c4b33;border-radius:1px;"></div>
<span class="a t" style="left:1071.60px;top:25.10px;line-height:7px;font-size:5.6px;color:#fff;font-weight:700;letter-spacing:0.212px;">dj</span>
<div class="a" style="left:1076.6px;top:31.8px;width:2.6px;height:2.6px;background:#4fae61;border-radius:50%;"></div>
<span class="a t" style="left:1082.00px;top:23.20px;line-height:12px;color:#111;letter-spacing:-0.288px;">myweb</span>
<svg class="a" style="left:1113.2px;top:27.5px;" width="6" height="4" viewBox="0 0 6 4"><path d="M0 0h5.6l-2.8 3.2z" fill="#6e6e6e"/></svg>
<svg class="a" style="left:1132.5px;top:24.3px;" width="10" height="10" viewBox="0 0 10 10"><path d="M7.6 2.3A3.6 3.6 0 1 0 8.6 5.6" stroke="#59a869" stroke-width="1.5" fill="none"/><path d="M5.6 0.2l3.6 0.4-0.6 3.4z" fill="#59a869"/><rect x="5.8" y="6.4" width="3.4" height="3.4" fill="#6e6e6e"/></svg>
<svg class="a" style="left:1149.8px;top:24.3px;" width="10" height="10" viewBox="0 0 10 10"><ellipse cx="5" cy="5.8" rx="2.9" ry="3.6" fill="#59a869"/><circle cx="5" cy="2" r="1.7" fill="#59a869"/><path d="M0.4 3.6l2 1M9.6 3.6l-2 1M0.2 6h2M9.8 6h-2M0.6 9l1.8-1.2M9.4 9L7.6 7.8" stroke="#59a869" stroke-width="0.9"/><path d="M2.6 5h4.8M2.4 7h5.2" stroke="#f2f2f2" stroke-width="0.6"/></svg>
<svg class="a" style="left:1166.5px;top:24.3px;" width="11" height="10" viewBox="0 0 11 10"><path d="M0.5 1l3.8-1 3.8 1v4.2c0 2.4-2 3.6-3.8 4.4C2.5 8.8 0.5 7.6 0.5 5.200z" fill="#6e6e6e"/><path d="M4.3 0v9.600c-1.800-0.800-3.800-2-3.800-4.400V1z" fill="#8c8c8c"/><path d="M5.800 4.600l4.600 2.600-4.600 2.700z" fill="#59a869" stroke="#f2f2f2" stroke-width="0.5"/></svg>
<svg class="a" style="left:1183.3px;top:24.3px;" width="11" height="10" viewBox="0 0 11 10"><circle cx="4.6" cy="4.6" r="3.9" fill="none" stroke="#6e6e6e" stroke-width="1"/><path d="M4.600 2.200v2.600l1.600 1" stroke="#6e6e6e" stroke-width="0.9" fill="none"/><path d="M5.800 4.800l4.600 2.500-4.600 2.600z" fill="#59a869" stroke="#f2f2f2" stroke-width="0.5"/></svg>
<svg class="a" style="left:1197.8px;top:27.7px;" width="6" height="4" viewBox="0 0 6 4"><path d="M0 0h5.200l-2.600 3z" fill="#6e6e6e"/></svg>
<div class="a" style="left:1210px;top:25px;width:7.4px;height:7px;background:#db5860;"></div>
<div class="a" style="left:1224px;top:23px;width:1px;height:13px;background:#e0e0e0;"></div>
<svg class="a" style="left:1231px;top:24px;" width="11" height="11" viewBox="0 0 11 11"><circle cx="4.400" cy="4.400" r="3.300" fill="none" stroke="#6e6e6e" stroke-width="1.300"/><path d="M6.800 6.800l3.400 3.400" stroke="#6e6e6e" stroke-width="1.500"/></svg>
<svg class="a" style="left:1248.5px;top:24.3px;" width="10" height="10" viewBox="0 0 10 10"><g fill="#6e6e6e"><circle cx="5" cy="5" r="3.1"/><rect x="4.1" y="0.3" width="1.8" height="9.4"/><rect x="4.1" y="0.3" width="1.8" height="9.4" transform="rotate(60 5 5)"/><rect x="4.1" y="0.3" width="1.8" height="9.4" transform="rotate(120 5 5)"/></g><circle cx="5" cy="5" r="1.4" fill="#f2f2f2"/></svg>
<svg class="a" style="left:1265.5px;top:24px;" width="10" height="11" viewBox="0 0 10 11"><path d="M5 0.300a5 5 0 0 1 0 10z" fill="#21d789"/><path d="M5 0.300a5 5 0 0 0-4.600 3l4.600 2z" fill="#fcf84a"/><path d="M0.400 3.300a5 5 0 0 0 4.600 7v-5z" fill="#07c3f2"/><path d="M5 2.600l3.600 2.700-3.600 2.700z" fill="#087cfa"/></svg>
<span class="a t" style="left:1272.80px;top:72.30px;line-height:12px;font-size:8.6px;letter-spacing:-0.727px;color:#222;transform:translate(-50%,-50%) rotate(90deg)">Database</span>
<svg class="a" style="left:1269px;top:45px;" width="9" height="9" viewBox="0 0 9 9"><path d="M1 0.500h1v7.500h-1zM3 0.500h1v7.500h-1zM5 0.500h1v7.500h-1zM7 0.500h1v7.500h-1z" fill="#5a5a5a"/></svg>
<span class="a t" style="left:1272.80px;top:125.80px;line-height:12px;font-size:8.6px;letter-spacing:-0.898px;color:#222;transform:translate(-50%,-50%) rotate(90deg)">SciView</span>
<svg class="a" style="left:1268.5px;top:103.5px;" width="8" height="7" viewBox="0 0 8 7"><path d="M0.500 1h7M0.500 3.500h7M0.500 6h7M2.700 0v7M5.300 0v7" stroke="#666" stroke-width="0.8"/></svg>
<span class="a t" style="left:18.70px;top:440.00px;line-height:12px;color:#222;letter-spacing:-0.426px;">Terminal:</span>
<span class="a t" style="left:64.00px;top:440.00px;line-height:12px;color:#222;letter-spacing:-0.512px;">Local</span>
<svg class="a" style="left:88px;top:443.7px;" width="5" height="5" viewBox="0 0 5 5"><path d="M0.500 0.500l4 4M4.500 0.500l-4 4" stroke="#c0c0c0" stroke-width="0.900"/></svg>
<div class="a" style="left:56px;top:452.3px;width:44px;height:1.7px;background:#a3a3a3;"></div>
<svg class="a" style="left:106.5px;top:442.5px;" width="8" height="8" viewBox="0 0 8 8"><path d="M4 0.600v6.800M0.600 4h6.800" stroke="#6e6e6e" stroke-width="1.100"/></svg>
<svg class="a" style="left:123.7px;top:444px;" width="8" height="5" viewBox="0 0 8 5"><path d="M0.700 0.700l3.100 3.100 3.100-3.100" stroke="#6e6e6e" stroke-width="1.100" fill="none"/></svg>
<svg class="a" style="left:1234.5px;top:440.5px;" width="10" height="10" viewBox="0 0 10 10"><g fill="#6e6e6e"><circle cx="5" cy="5" r="3.1"/><rect x="4.1" y="0.3" width="1.8" height="9.4"/><rect x="4.1" y="0.3" width="1.8" height="9.4" transform="rotate(60 5 5)"/><rect x="4.1" y="0.3" width="1.8" height="9.4" transform="rotate(120 5 5)"/></g><circle cx="5" cy="5" r="1.4" fill="#f2f2f2"/></svg>
<svg class="a" style="left:1253px;top:444px;" width="9" height="3" viewBox="0 0 9 3"><path d="M0.500 1.500h7.500" stroke="#6e6e6e" stroke-width="1"/></svg>
<span class="a mono tm" style="left:17.500px;top:455.20px">Microsoft Windows [Version 10.0.19045.3693]</span>
<span class="a mono tm" style="left:17.500px;top:472.60px">(c) Microsoft Corporation. All rights reserved.</span>
<span class="a mono tm" style="left:17.500px;top:507.40px">(venv) H:\myweb&gt;python manage.py startapp product</span>
<span class="a mono tm" style="left:17.500px;top:542.20px">(venv) H:\myweb&gt;</span>
<div class="a" style="left:113.2px;top:541.7px;width:6.8px;height:17.6px;border:1px solid #3a3a3a;"></div>
<div class="a" style="left:235px;top:665px;width:54px;height:14px;background:#c9c9c9;"></div>
<svg class="a" style="left:23.8px;top:669.1999999999999px;" width="7.7" height="7.7" viewBox="0 0 9 9"><circle cx="1.600" cy="1.400" r="1" fill="#6e6e6e"/><circle cx="4.800" cy="2.400" r="1" fill="#6e6e6e"/><path d="M1.600 2v6.500M4.800 3.200c0 1.800-3.200 1.400-3.200 3.300" stroke="#6e6e6e" stroke-width="0.900" fill="none"/></svg>
<span class="a t" style="left:33.50px;top:666.90px;line-height:12px;color:#222;letter-spacing:-0.351px;">Version Control</span>
<svg class="a" style="left:101.8px;top:669.1999999999999px;" width="7.7" height="7.7" viewBox="0 0 9 9"><path d="M1 0.500l6 3.800-6 3.800z" fill="#6e6e6e"/><rect x="5.600" y="6" width="3" height="3" fill="#59a869"/></svg>
<span class="a t" style="left:113.00px;top:666.90px;line-height:12px;color:#222;letter-spacing:-0.759px;">Run</span>
<svg class="a" style="left:139.8px;top:669.1999999999999px;" width="7.7" height="7.7" viewBox="0 0 9 9"><path d="M0.500 1.500h1.500M3 1.500h5.500M0.500 4.500h1.500M3 4.500h5.500M0.500 7.500h1.500M3 7.500h5.500" stroke="#6e6e6e" stroke-width="1"/></svg>
<span class="a t" style="left:150.50px;top:666.90px;line-height:12px;color:#222;letter-spacing:-0.835px;">TODO</span>
<svg class="a" style="left:185.8px;top:669.1999999999999px;" width="7.7" height="7.7" viewBox="0 0 9 9"><circle cx="4.300" cy="4.300" r="3.700" fill="#6e6e6e"/><rect x="3.800" y="2" width="1" height="3" fill="#f2f2f2"/><rect x="3.800" y="5.700" width="1" height="1" fill="#f2f2f2"/></svg>
<span class="a t" style="left:196.50px;top:666.90px;line-height:12px;color:#222;letter-spacing:-0.603px;">Problems</span>
<svg class="a" style="left:242.8px;top:669.1999999999999px;" width="7.7" height="7.7" viewBox="0 0 9 9"><rect x="0.500" y="0.800" width="7.600" height="7" fill="none" stroke="#6e6e6e" stroke-width="1"/><path d="M2 3l1.600 1.400-1.600 1.400M4.400 6h2.400" stroke="#6e6e6e" stroke-width="0.800" fill="none"/></svg>
<span class="a t" style="left:253.50px;top:666.90px;line-height:12px;color:#222;letter-spacing:-0.556px;">Terminal</span>
<svg class="a" style="left:297.8px;top:669.1999999999999px;" width="7.7" height="7.7" viewBox="0 0 9 9"><path d="M4.500 0.500l4 1.700-4 1.700-4-1.700z" fill="#6e6e6e"/><path d="M0.500 4.400l4 1.700 4-1.700M0.500 6.500l4 1.700 4-1.700" stroke="#6e6e6e" stroke-width="0.900" fill="none"/></svg>
<span class="a t" style="left:309.50px;top:666.90px;line-height:12px;color:#222;letter-spacing:-0.662px;">Python Packages</span>
<svg class="a" style="left:382.8px;top:669.1999999999999px;" width="7.7" height="7.7" viewBox="0 0 9 9"><path d="M2.500 0.500h4v3h-4zM0.500 2.800h8v3.600h-8zM2.500 5.800h4v3h-4z" fill="#6e6e6e"/><circle cx="3.600" cy="1.700" r="0.500" fill="#f2f2f2"/><circle cx="5.500" cy="7.500" r="0.500" fill="#f2f2f2"/></svg>
<span class="a t" style="left:394.00px;top:666.90px;line-height:12px;color:#222;letter-spacing:-0.480px;">Python Console</span>
<svg class="a" style="left:1214.8px;top:669.1999999999999px;" width="7.7" height="7.7" viewBox="0 0 9 9"><circle cx="4.500" cy="4.300" r="3.600" fill="none" stroke="#6e6e6e" stroke-width="0.900"/><path d="M6.600 7.200l1.600 1.600" stroke="#6e6e6e" stroke-width="0.900"/></svg>
<span class="a t" style="left:1226.00px;top:666.90px;line-height:12px;color:#222;letter-spacing:-0.636px;">Event Log</span>
<svg class="a" style="left:4px;top:682.5px;" width="8" height="8" viewBox="0 0 8 8"><rect x="0.500" y="1.500" width="5.500" height="5.500" fill="none" stroke="#777" stroke-width="0.900"/><path d="M2 1.500v-1h5.500v5.500h-1.500" fill="none" stroke="#777" stroke-width="0.900"/></svg>
<span class="a t" style="left:1056.50px;top:680.80px;line-height:12px;color:#333;letter-spacing:-0.684px;">8:43</span>
<span class="a t" style="left:1078.50px;top:680.80px;line-height:12px;color:#333;letter-spacing:-1.114px;">CRLF</span>
<span class="a t" style="left:1104.50px;top:680.80px;line-height:12px;color:#333;letter-spacing:-0.672px;">UTF-8</span>
<span class="a t" style="left:1133.00px;top:680.80px;line-height:12px;color:#333;letter-spacing:-0.615px;">4 spaces</span>
<span class="a t" style="left:1170.50px;top:680.80px;line-height:12px;color:#333;letter-spacing:-0.376px;">Python 3.10 (myweb) (2)</span>
<svg class="a" style="left:1262.5px;top:682.5px;" width="9" height="9" viewBox="0 0 9 9"><rect x="0.800" y="4.200" width="5.400" height="4" fill="#6e6e6e"/><path d="M5 4.200v-1.600a1.600 1.600 0 0 1 3.200 0v0.800" fill="none" stroke="#6e6e6e" stroke-width="0.900"/></svg>
<div class="a" style="left:0px;top:693px;width:1280px;height:27px;background:linear-gradient(90deg,#3b3e3a 0,#3c3f3b 18%,#39443c 42%,#3a433d 75%,#3c4341 100%);"></div>
<svg class="a" style="left:10.2px;top:700.6px;" width="12" height="12" viewBox="0 0 12 12"><path d="M0 1.700l5-0.700v4.700h-5zM5.800 0.900l6.200-0.900v5.700h-6.200zM0 6.500h5v4.700l-5-0.700zM5.800 6.500h6.200v5.500l-6.200-0.900z" fill="#fff"/></svg>
<div class="a" style="left:32px;top:693px;width:192px;height:27px;background:#f1f2f2;border-top:1px solid #dcdcdc;"></div>
<svg class="a" style="left:39.5px;top:700.5px;" width="12" height="12" viewBox="0 0 12 12"><circle cx="7.200" cy="4.600" r="3.700" fill="none" stroke="#333" stroke-width="1.100"/><path d="M4.500 7.300l-4 4" stroke="#333" stroke-width="1.200"/></svg>
<span class="a t" style="left:59.00px;top:700.20px;line-height:14px;font-size:10px;color:#3c3c3c;letter-spacing:-0.191px;">Type here to search</span>
<svg class="a" style="left:174px;top:693.5px;" width="50" height="26.5" viewBox="0 0 50 26.5"><defs><linearGradient id="sk" x1="0" x2="1"><stop offset="0" stop-color="#f1f2f2"/><stop offset="0.150" stop-color="#f0f1f3"/><stop offset="1" stop-color="#eef0f4"/></linearGradient><filter id="bl" x="-10%" y="-10%" width="120%" height="120%"><feGaussianBlur stdDeviation="0.450"/></filter></defs><rect width="50" height="26.500" fill="url(#sk)"/><g filter="url(#bl)"><path d="M3 23.500q12-1.500 24-0.500t23-0.500v4H3z" fill="#c9d6ea"/><rect x="12.500" y="10.200" width="21.500" height="13" fill="#f1ddd2"/><path d="M12 11l3-1.800h16.500l3 1.800z" fill="#b9a3a3"/><rect x="20" y="2.500" width="4" height="7.500" fill="#8d8d8f"/><path d="M20 3.500l2-2.500 2 2.500z" fill="#8d8d8f"/><path d="M14.500 13h1.600v2.600h-1.600zM18 13h1.600v2.600h-1.600zM21.500 13h1.600v2.600h-1.600zM25 13h1.600v2.600h-1.600zM28.500 13h1.600v2.600h-1.600zM31.500 13h1.400v2.600h-1.400z" fill="#c9a9a4"/><path d="M14 18.500h19.500v4.500H14z" fill="#e3a39a"/><path d="M15.500 19.500h2v3.500h-2zM19.500 19.500h2v3.500h-2zM23.500 19.500h2v3.500h-2zM27.500 19.500h2v3.500h-2z" fill="#c8665f"/><rect x="36" y="11.500" width="14" height="11.500" fill="#ecdba4"/><path d="M35.500 12l3-2h11.500v2z" fill="#dcc3b0"/><path d="M38 14h1.600v3h-1.600zM42 14h1.600v3h-1.600zM46 14h1.600v3h-1.600zM38 19h1.600v3h-1.600zM42 19h1.600v3h-1.600zM46 19h1.600v3h-1.600z" fill="#d9c27e"/><path d="M10 5.500l-4.800 17.500h9.600z" fill="#a9cbae"/><path d="M10 12l-4.500 11h9z" fill="#86b591"/></g></svg>
<svg class="a" style="left:233.5px;top:701px;" width="13" height="11" viewBox="0 0 13 11"><rect x="0.600" y="2.600" width="7.600" height="5.800" fill="none" stroke="#fff" stroke-width="1.200"/><path d="M0.600 0.600h7.600M0.600 10.400h7.600" stroke="#fff" stroke-width="1.200"/><path d="M10.900 0v2M10.900 3.500v4M10.900 9v2" stroke="#fff" stroke-width="1.400"/></svg>
<svg class="a" style="left:264.5px;top:697.5px;" width="18" height="18" viewBox="0 0 18 18"><defs><linearGradient id="eg" x1="0" y1="0" x2="0.300" y2="1"><stop offset="0" stop-color="#2fa4e4"/><stop offset="1" stop-color="#1461b8"/></linearGradient><linearGradient id="eg2" x1="0" y1="0" x2="1" y2="1"><stop offset="0" stop-color="#3fb6d8"/><stop offset="0.500" stop-color="#55c890"/><stop offset="1" stop-color="#3fae6a"/></linearGradient></defs><circle cx="9" cy="9" r="8.400" fill="url(#eg)"/><path d="M5 1.600A8.400 8.400 0 0 1 17.400 9c0 2.600-2 3.800-3.900 3.800-2.300 0-3.300-1.400-2.800-2.600 0.800-1.900-0.900-4-3.400-4-1.500 0-2.900 0.500-4.100 1.400 0.200-2.700 1-4.700 1.800-6z" fill="url(#eg2)"/><path d="M7.200 6.400c-2.300 0-4 1.900-4 4.200 0 3.200 2.600 6.200 6.400 6.700-3.600 0.200-7.500-2-8.400-6.200 0.700-3 3.600-4.900 6-4.700z" fill="#0f4c92" opacity="0.750"/><circle cx="7.800" cy="10.300" r="2.600" fill="#1259a6"/></svg>
<svg class="a" style="left:298px;top:697.5px;" width="18" height="18" viewBox="0 0 18 18"><ellipse cx="9" cy="9" rx="8.600" ry="3.400" transform="rotate(-32 9 9)" fill="none" stroke="#f2c744" stroke-width="1.400"/><circle cx="9" cy="9.600" r="6.300" fill="#46b0ea"/><circle cx="9" cy="9.600" r="3" fill="#37443b"/><rect x="5.500" y="9" width="10" height="1.800" fill="#d5eefb"/><path d="M11 11.500h4.400v2.500h-3z" fill="#37443b"/><path d="M10 0.800q5-1 6.400 1.400" stroke="#f2c744" stroke-width="1.300" fill="none"/></svg>
<svg class="a" style="left:331px;top:698px;" width="18" height="17" viewBox="0 0 18 17"><rect x="3" y="2.500" width="4" height="13.500" fill="#2d4a66"/><rect x="6.500" y="1" width="10.500" height="15" fill="#3f97dc"/><path d="M1.500 3l2-2.400 2 2.400v2h-4z" fill="#f3f6f9"/><rect x="10" y="9.500" width="5" height="5" fill="#7cc0f0"/><path d="M9.500 5h5M9.500 7h5" stroke="#8cc9f3" stroke-width="0.800"/></svg>
<svg class="a" style="left:362.5px;top:698px;" width="18" height="16" viewBox="0 0 18 16"><circle cx="3.600" cy="4.500" r="3.100" fill="#d2486a"/><circle cx="14.400" cy="4.500" r="3" fill="#3f9e70"/><circle cx="9" cy="11.700" r="3" fill="#3f86c9"/></svg>
<svg class="a" style="left:395.5px;top:697.5px;" width="18" height="18" viewBox="0 0 18 18"><defs><linearGradient id="ff" x1="0.800" y1="0" x2="0.250" y2="1"><stop offset="0" stop-color="#ffd94a"/><stop offset="0.350" stop-color="#ff9a1f"/><stop offset="0.700" stop-color="#f4513a"/><stop offset="1" stop-color="#e0328c"/></linearGradient></defs><circle cx="9" cy="9.600" r="7.800" fill="url(#ff)"/><path d="M11 1.200q1.600-1 2.200-0.600 0.200 1.600 1.800 3.200 2 2.400 1.600 5.600-1-3.400-3.200-4.400-1.800-1.200-2.400-3.800z" fill="#ffd23a"/><circle cx="8.200" cy="9.800" r="2.900" fill="#8a3fc8" opacity="0.900"/><path d="M5.200 8.200q1.400-1.800 3.600-1.200 1.600 0.600 2.400 2-2-0.800-3.200-0.200-1.600 0.600-2.800-0.600z" fill="#ff8a2a"/><path d="M3 4.500q1.500-2.500 4-3-1 1.500-0.500 3-1.500 0.500-2 2z" fill="#ff9a2a"/></svg>
<svg class="a" style="left:428.5px;top:698px;" width="18" height="17" viewBox="0 0 18 17"><circle cx="10" cy="8.500" r="7.500" fill="#e8512f"/><path d="M10 1a7.500 7.500 0 0 1 7.500 7.500h-7.500z" fill="#f58b63"/><path d="M10 8.500h7.500a7.500 7.500 0 0 1-7.500 7.500z" fill="#c9361b"/><rect x="1" y="4.300" width="8.400" height="8.400" rx="0.800" fill="#c43e1c"/></svg>
<span class="a t" style="left:431.90px;top:702.10px;line-height:9px;font-size:7px;color:#fff;font-weight:700;">P</span>
<svg class="a" style="left:461.5px;top:698.7px;" width="16" height="14" viewBox="0 0 16 14"><path d="M0.500 1.500l13.500-1.200 1.500 10.700-4 2.700-10 0.300z" fill="#bcc17e"/><path d="M11.500 13.700l0.500-3.200 3.500 0.500z" fill="#9fa566"/><path d="M0.500 1.500l13.500-1.200 0.300 2.200-13.600 1.200z" fill="#adb36f"/></svg>
<div class="a" style="left:486.5px;top:693px;width:32px;height:27px;background:linear-gradient(180deg,#555f5b,#5d6662);"></div>
<div class="a" style="left:496px;top:699.3px;width:14.4px;height:14.6px;background:linear-gradient(135deg,#25c987 0,#2fcf7a 45%,#b5e05c 75%,#e8ee58 100%);border-radius:1.500px;"></div>
<div class="a" style="left:497.3px;top:700.4px;width:11.6px;height:12px;background:#050807;border-radius:0.500px;"></div>
<span class="a t" style="left:498.60px;top:701.30px;line-height:7px;font-size:5.6px;color:#fff;font-weight:700;letter-spacing:-0.090px;">PC</span>
<div class="a" style="left:498.6px;top:709.8px;width:4.6px;height:1.1px;background:#fff;"></div>
<div class="a" style="left:391.5px;top:718px;width:25.5px;height:2px;background:#e9c9d9;"></div>
<div class="a" style="left:424px;top:718px;width:26px;height:2px;background:#e9c9d9;"></div>
<div class="a" style="left:457px;top:718px;width:26px;height:2px;background:#e9c9d9;"></div>
<div class="a" style="left:486px;top:718px;width:32px;height:2px;background:#e9c9d9;"></div>
<svg class="a" style="left:1011px;top:699px;" width="15" height="15" viewBox="0 0 15 15"><defs><radialGradient id="sun" cx="0.400" cy="0.350" r="0.750"><stop offset="0" stop-color="#ffb53a"/><stop offset="0.600" stop-color="#f98f16"/><stop offset="1" stop-color="#ec6f0c"/></radialGradient></defs><circle cx="7.500" cy="7.500" r="7.200" fill="url(#sun)"/></svg>
<span class="a t" style="left:1032.40px;top:700.50px;line-height:13px;font-size:9.5px;color:#fff;letter-spacing:-0.642px;">57°F</span>
<span class="a t" style="left:1056.50px;top:700.50px;line-height:13px;font-size:9.5px;color:#fff;letter-spacing:-0.487px;">Sunny</span>
<svg class="a" style="left:1097px;top:703.5px;" width="10" height="6" viewBox="0 0 10 6"><path d="M0.800 5.200l4-4 4 4" stroke="#fff" stroke-width="1.100" fill="none"/></svg>
<svg class="a" style="left:1113.5px;top:700.5px;" width="10" height="13" viewBox="0 0 10 13"><rect x="1" y="3" width="6" height="6.500" rx="1" fill="none" stroke="#fff" stroke-width="1"/><circle cx="4" cy="6.200" r="1.300" fill="#fff"/><path d="M7.500 5l1.800-1v4.500l-1.800-1M2 1.200q2-1.400 4 0M2 11.500q2 1.400 4 0" stroke="#fff" stroke-width="0.900" fill="none"/></svg>
<svg class="a" style="left:1127.5px;top:701.5px;" width="13" height="11" viewBox="0 0 13 11"><path d="M0.600 3.700h2.200l2.800-2.700v9l-2.800-2.700h-2.200z" fill="none" stroke="#fff" stroke-width="1"/><path d="M7.300 3.500q1.400 2 0 4M9.200 2q2.200 3.500 0 7M11 0.800q3 4.700 0 9.400" stroke="#fff" stroke-width="0.900" fill="none"/></svg>
<svg class="a" style="left:1145.5px;top:699.5px;" width="8" height="14" viewBox="0 0 8 14"><rect x="1.500" y="0.500" width="5" height="8.500" rx="2.300" fill="#fff"/><path d="M0.500 8.500q0 3 3.500 3t3.500-3M4 11.500v2M1.500 13.400h5" stroke="#fff" stroke-width="1" fill="none"/></svg>
<svg class="a" style="left:1160.5px;top:701px;" width="12" height="12" viewBox="0 0 12 12"><rect x="3.500" y="1" width="8" height="6.400" fill="none" stroke="#fff" stroke-width="1"/><path d="M6 9.800h4M8 7.400v2.400" stroke="#fff" stroke-width="1"/><rect x="0.500" y="4.200" width="3.600" height="6.800" fill="#3a433e" stroke="#fff" stroke-width="0.900"/></svg>
<span class="a t" style="left:1178.30px;top:701.00px;line-height:12px;font-size:8.3px;color:#fff;letter-spacing:-0.895px;">ENG</span>
<span class="a t" style="left:1205.20px;top:694.50px;line-height:12px;font-size:8.3px;color:#fff;letter-spacing:-0.415px;">11:06 AM</span>
<span class="a t" style="left:1201.70px;top:706.20px;line-height:12px;font-size:8.3px;color:#fff;letter-spacing:-0.345px;">2023-12-24</span>
<svg class="a" style="left:1251.5px;top:700.5px;" width="13" height="12" viewBox="0 0 13 12"><path d="M0.600 0.600h11v8h-6.600l-2.600 2.400v-2.400h-1.800z" fill="none" stroke="#fff" stroke-width="1"/><circle cx="10.200" cy="8.400" r="1.800" fill="#3c4341" stroke="#fff" stroke-width="0.800"/></svg>
</body></html>
